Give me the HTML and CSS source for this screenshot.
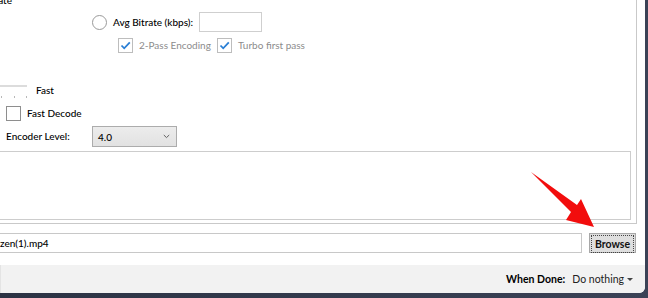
FILE: index.html
```html
<!DOCTYPE html>
<html lang="en">
<head>
    <meta charset="UTF-8">
    <title>HandBrake - Video</title>
    <link rel="stylesheet" href="styles.css">
</head>
<body>
    <div class="window">
        <div class="main">
            <div class="tab-panel">
                <div class="cut-label">Constant Framerate</div>

                <div class="row bitrate-row">
                    <span class="radio"></span>
                    <span class="label bitrate-label">Avg Bitrate (kbps):</span>
                    <span class="textbox"></span>
                </div>

                <div class="row pass-row">
                    <div class="check-item first">
                        <span class="checkbox checked disabled">
                            <svg width="13" height="13" viewBox="0 0 13 13"><polyline points="2.5,6.5 5.2,9.3 10.8,3.4" fill="none" stroke="#2a7fd5" stroke-width="1.8"/></svg>
                        </span>
                        <span class="label muted">2-Pass Encoding</span>
                    </div>
                    <div class="check-item">
                        <span class="checkbox checked disabled">
                            <svg width="13" height="13" viewBox="0 0 13 13"><polyline points="2.5,6.5 5.2,9.3 10.8,3.4" fill="none" stroke="#2a7fd5" stroke-width="1.8"/></svg>
                        </span>
                        <span class="label muted">Turbo first pass</span>
                    </div>
                </div>

                <div class="row slider-row">
                    <div class="slider">
                        <div class="track"></div>
                        <div class="ticks"><i></i><i></i><i></i></div>
                    </div>
                    <span class="label fast-label">Fast</span>
                </div>

                <div class="row decode-row">
                    <span class="checkbox"></span>
                    <span class="label">Fast Decode</span>
                </div>

                <div class="row level-row">
                    <span class="label level-label">Encoder Level:</span>
                    <div class="combo">
                        <span>4.0</span>
                        <svg width="7" height="5" viewBox="0 0 7 5"><polyline points="0.8,1 3.5,3.6 6.2,1" fill="none" stroke="#606060" stroke-width="1"/></svg>
                    </div>
                </div>

                <div class="options-box"></div>
            </div>

            <div class="dest-row">
                <div class="dest-input">zen(1).mp4</div>
                <button class="browse-btn"><span>Browse</span></button>
            </div>
        </div>

        <div class="footer">
            <span class="when-label">When Done:</span>
            <span class="when-value">Do nothing</span>
            <span class="caret"></span>
        </div>
    </div>

    <svg class="arrow" width="648" height="298" viewBox="0 0 648 298">
        <polygon points="531,172 577,205 581,199 594,227 566,220 571,212" fill="#f20d0d"/>
    </svg>
</body>
</html>
```

FILE: styles.css
```css
body {
    margin: 0;
    width: 648px;
    height: 298px;
    overflow: hidden;
    background: linear-gradient(90deg, #2c3344, #3b4256);
    font-family: 'Lato', 'Liberation Sans', sans-serif;
    font-size: 10px;
    color: #000;
    position: relative;
}

.window {
    width: 645px;
    height: 293px;
    background: #fcfcfc;
    border-bottom-right-radius: 6px;
    overflow: hidden;
    display: flex;
    flex-direction: column;
}

.main {
    height: 265px;
    background: #ffffff;
}

.tab-panel {
    width: 636px;
    height: 223px;
    border-right: 1px solid #c9c9c9;
    border-bottom: 1px solid #c9c9c9;
    overflow: hidden;
}

.label {
    line-height: 13px;
    white-space: nowrap;
    font-weight: 500;
}

.muted {
    color: #8c8c8c;
    font-weight: normal;
}

/* label of the column to the left, scrolled mostly out of view */
.cut-label {
    width: 100px;
    margin-left: -88px;
    margin-top: -6px;
    height: 13px;
    line-height: 13px;
    text-align: right;
    white-space: nowrap;
    font-weight: 500;
}

.row {
    display: flex;
    align-items: center;
}

.bitrate-row {
    margin-top: 5px;
    height: 20px;
    padding-left: 92px;
}

.radio {
    width: 13px;
    height: 13px;
    border: 1px solid #9a9a9a;
    border-radius: 50%;
    background: #fff;
}

.bitrate-label {
    margin-left: 6px;
    width: 86px;
}

.textbox {
    width: 61px;
    height: 18px;
    border: 1px solid #cfcfcf;
    background: #fff;
}

.pass-row {
    margin-top: 6px;
    height: 15px;
    padding-left: 118px;
}

.check-item {
    display: flex;
    align-items: center;
}

.check-item.first {
    width: 99px;
}

.checkbox {
    width: 13px;
    height: 13px;
    border: 1px solid #8e8e8e;
    background: #fff;
    display: flex;
    align-items: center;
    justify-content: center;
    margin-right: 6px;
}

.checkbox.disabled {
    border-color: #bdbdbd;
}

.slider-row {
    margin-top: 32px;
    height: 14px;
    align-items: flex-start;
}

.slider {
    width: 27px;
    height: 14px;
}

.track {
    height: 2px;
    background: #dcdcdc;
}

.ticks {
    display: flex;
    justify-content: space-between;
    margin-top: 9px;
    padding: 0 0 0 1px;
}

.ticks i {
    width: 1px;
    height: 2px;
    background: #b8b8b8;
}

.fast-label {
    margin-left: 9px;
    margin-top: -1px;
}

.decode-row {
    margin-top: 7px;
    height: 15px;
    padding-left: 6px;
}

.level-row {
    margin-top: 5px;
    height: 21px;
    padding-left: 6px;
}

.level-label {
    width: 86px;
}

.combo {
    width: 85px;
    height: 21px;
    border: 1px solid #acacac;
    background: linear-gradient(#ececec, #e2e2e2);
    display: flex;
    align-items: center;
    justify-content: space-between;
    padding: 0 6px 0 5px;
    box-sizing: border-box;
    font-weight: 500;
}

.options-box {
    margin-top: 4px;
    margin-left: -2px;
    width: 631px;
    height: 67px;
    border: 1px solid #cdcdcd;
}

.dest-row {
    display: flex;
    align-items: center;
    margin-top: 9px;
    height: 20px;
}

.dest-input {
    margin-left: -2px;
    width: 581px;
    height: 18px;
    line-height: 18px;
    border: 1px solid #c8c8c8;
    padding-left: 1px;
    font-weight: 500;
}

.browse-btn {
    margin-left: 7px;
    width: 47px;
    height: 20px;
    padding: 1px;
    border: 1px solid #a8a8a8;
    background: #dedede;
    font-family: inherit;
    font-size: 10.5px;
    font-weight: bold;
    color: #111;
}

.browse-btn span {
    display: block;
    height: 16px;
    line-height: 16px;
    border: 1px dotted #444;
}

.footer {
    height: 28px;
    background: #f2f2f2;
    border-left: 1px solid #e4e4e4;
    display: flex;
    align-items: center;
    justify-content: flex-end;
    padding-right: 12px;
    font-size: 10.5px;
}

.when-label {
    font-weight: bold;
    margin-right: 7px;
}

.when-value {
    color: #222;
}

.caret {
    margin-left: 3px;
    width: 0;
    height: 0;
    border-left: 3px solid transparent;
    border-right: 3px solid transparent;
    border-top: 3px solid #444;
}

.arrow {
    position: absolute;
    left: 0;
    top: 0;
    pointer-events: none;
}
```
